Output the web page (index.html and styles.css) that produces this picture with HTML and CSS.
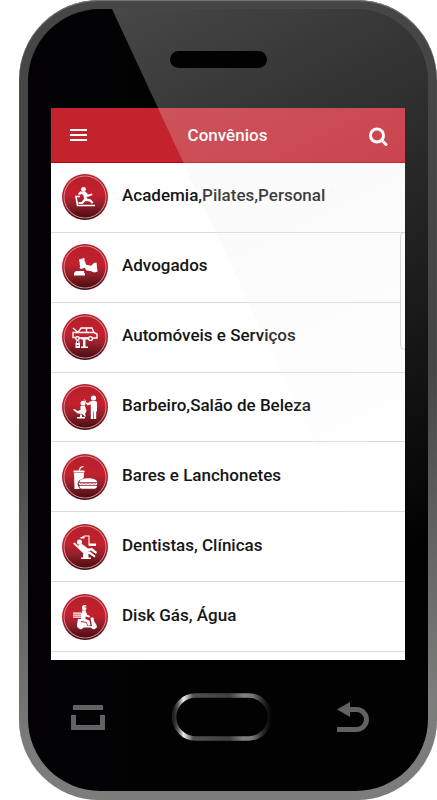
FILE: index.html
```
<!DOCTYPE html>
<html lang="pt-BR">
<head>
    <meta charset="UTF-8">
    <meta name="viewport" content="width=device-width, initial-scale=1.0">
    <title>Convênios</title>
    <link rel="stylesheet" href="styles.css">
</head>
<body>
    <div class="phone">
        <div class="face">
            <div class="top"><div class="speaker"></div></div>

            <div class="screen">
                <header class="bar">
                    <button class="bar-button" aria-label="Menu">
                        <svg width="18" height="14" viewBox="0 0 18 14"><path d="M1 2h17M1 7h17M1 12h17" stroke="#fff" stroke-width="2"/></svg>
                    </button>
                    <h1>Convênios</h1>
                    <button class="bar-button search" aria-label="Buscar">
                        <svg width="20" height="20" viewBox="0 0 20 20" fill="none" stroke="#fff" stroke-width="3"><circle cx="9" cy="8.500" r="6.500"/><path d="M13.500 13l4.500 4.500" stroke-linecap="round"/></svg>
                    </button>
                </header>

                <ul class="list">
                    <li><a class="row" href="#">
                        <svg class="icon" viewBox="0 0 46 46">
                            <circle cx="21.500" cy="15.300" r="2.400"/>
                            <path d="M18 17.500h5.500l2.500 3 4-1 .500 1.500-5 2-1-.500.500 2 4 1 2.500 3-1.500 1.300-2.500-2.300-4-.500-3 3h-4v-2h3l2.500-3-.500-3.500-1.500-1.500-3 1-1-1.300z"/>
                            <path class="line" d="M18 22.500h-4l1.500 9H33" stroke-width="1.600"/>
                        </svg>
                        <span>Academia,Pilates,Personal</span>
                    </a></li>
                    <li><a class="row" href="#">
                        <svg class="icon" viewBox="0 0 46 46">
                            <path d="M17 15.500l5-1.500.800 1-.500 1 2 5 1.200 1-.500 1-6 2-1.500-1 .500-1-.500-5.500-.500-.500z"/>
                            <path d="M23 20.500l6 1.300 3-2.800 2.500-.500 1 9-3 1-4-1.500-4-.500-2-3z"/>
                            <path d="M14 27h8v2h1v2.500H12V29z"/>
                        </svg>
                        <span>Advogados</span>
                    </a></li>
                    <li><a class="row" href="#">
                        <svg class="icon" viewBox="0 0 46 46">
                            <path class="line" d="M11 14l5 4.500M16 18.500h-5v5h3M17 24h9M31 24h4v-4l-3-1.500H16l3-4.500h11l2 4.500M24.500 14v4" stroke-width="1.400"/>
                            <circle class="line" cx="15.500" cy="24.500" r="1.700" stroke-width="1.400"/>
                            <circle class="line" cx="28.500" cy="24.500" r="1.900" stroke-width="1.400"/>
                            <path d="M19 23.500h7v2h-2.500v7H26V34h-7v-1.500h2v-7h-2z"/>
                            <path d="M13.500 29h4.500v5h-4.500z"/>
                            <path class="line" d="M14.500 29v-1.500l1.300-1 1.300 1V29" stroke-width="1"/>
                            <path d="M14.500 31h2.500v.800h-2.500z" fill="#94202a"/>
                        </svg>
                        <span>Automóveis e Serviços</span>
                    </a></li>
                    <li><a class="row" href="#">
                        <svg class="icon" viewBox="0 0 46 46">
                            <circle cx="31.500" cy="14" r="2.600"/>
                            <path d="M29 17h5l1 1.500V27l-.800.500V35h-2.400v-7.500h-.600V35h-2.400V20.500l-3.300.800-1.500-1.500.500-1.300 1.500.500z"/>
                            <circle cx="21" cy="19.300" r="2.500"/>
                            <path d="M18.500 22h4.500l1.500 5-1.500 3 1 2.500h-1.500l-2-2.500-5-.500-4.500-4 1.500-.500 3 2 3-1z"/>
                            <path d="M18 30.500h2V33h3v1.500h-8V33h3z"/>
                            <path class="line" d="M22.500 15.500l2 4" stroke-width=".8"/>
                        </svg>
                        <span>Barbeiro,Salão de Beleza</span>
                    </a></li>
                    <li><a class="row" href="#">
                        <svg class="icon" viewBox="0 0 46 46">
                            <path class="line" d="M17 17l1.500-3.500 3-1" stroke-width="1.200"/>
                            <path d="M11.500 16.500h11v2h-11zM12 19h10l-.300 5-4.700 2.500-1.500 2.500.500 3 1.500 2v1h-5z"/>
                            <path d="M17.500 28c0-5 17.500-5 17.500 0zM16.500 28.700h19l-1 2.300h-17zM17.500 31.700h17.500c0 2-1 3-3 3H20c-2 0-2.500-1-2.500-3z"/>
                            <path d="M18 29.200l2 1 2-1 2 1 2-1 2 1 2-1 2 1 2-1" fill="none" stroke="#94202a" stroke-width=".6"/>
                        </svg>
                        <span>Bares e Lanchonetes</span>
                    </a></li>
                    <li><a class="row" href="#">
                        <svg class="icon" viewBox="0 0 46 46">
                            <circle cx="17.500" cy="18" r="2.600"/>
                            <path class="line" d="M20 13.500l2.500-1.500H27v9h7" stroke-width="1.100"/>
                            <path d="M27 19.500h7V22h-7zM18.500 13h4v1.500h-4z"/>
                            <path d="M17 20.500l3-.500 6 4.500 4-.500 5 4-1 2-5-3.500-4 1.500-3-.500-6-5z"/>
                            <path d="M11 19.500l1.500-1 9.500 8.500 6 .500 5.500 4.500-1 1.500-5-3.500h-5.500z"/>
                            <path d="M21 30h5.500v3.500H29V35H19v-1.500h2z"/>
                        </svg>
                        <span>Dentistas, Clínicas</span>
                    </a></li>
                    <li><a class="row" href="#">
                        <svg class="icon" viewBox="0 0 46 46">
                            <path d="M20 13.500c0-3 4.500-3 4.500-1h-2v1h2l-.500 3h-3.500z"/>
                            <path d="M20.500 16.500h3l1.500 4 3 1.500-.500 1.500-4-1v2.500l4 1.500 1 5h-2.500l-1.500-3.500-5.500-1v-7z"/>
                            <path d="M11 18.500h8v1.300h-8zM11 20.500h8v1.300h-8zM11 22.500h8v1.300h-8z"/>
                            <path d="M16 25h3v3l5 .700 1.500 3.300h4.500l-1-5-.500-3.500h3l.500 3.500 2.500 4 .500 2.500H15.500l-.500-2 .500-4z"/>
                            <path d="M16 32.500h5.500c0 3.500-5.500 3.500-5.500 0zM29 32.500h5.500c0 3.500-5.500 3.500-5.500 0z"/>
                        </svg>
                        <span>Disk Gás, Água</span>
                    </a></li>
                </ul>
                <div class="edge-tab"></div>
            </div>

            <nav class="keys">
                <button class="key" aria-label="Recentes">
                    <svg width="34" height="25" viewBox="0 0 34 25" fill="#626262"><path d="M2 0h30v5H2zM0 10h5v10h24V10h5v15H0z"/></svg>
                </button>
                <button class="key" aria-label="Início">
                    <svg width="100" height="48" viewBox="0 0 100 48">
                        <defs>
                            <linearGradient id="ring">
                                <stop offset="0" stop-color="#222"/>
                                <stop offset=".04" stop-color="#555"/>
                                <stop offset=".1" stop-color="#eee"/>
                                <stop offset=".2" stop-color="#505050"/>
                                <stop offset=".58" stop-color="#404040"/>
                                <stop offset=".72" stop-color="#808280"/>
                                <stop offset=".82" stop-color="#777"/>
                                <stop offset=".92" stop-color="#2b2b2b"/>
                                <stop offset="1" stop-color="#080808"/>
                            </linearGradient>
                        </defs>
                        <rect x="3" y="2.500" width="96" height="43" rx="21.500" fill="none" stroke="url(#ring)" stroke-width="4.500"/>
                    </svg>
                </button>
                <button class="key" aria-label="Voltar">
                    <svg width="32" height="30" viewBox="0 0 32 30"><path d="M0 7.500L13 0v15z" fill="#626262"/><path d="M11 7.500h8.500a10 10 0 0 1 0 20H0" fill="none" stroke="#626262" stroke-width="5"/></svg>
                </button>
            </nav>

            <!-- diagonal reflection on the glass -->
            <svg class="glare" viewBox="0 0 400 782" preserveAspectRatio="none">
                <defs>
                    <linearGradient id="shine" gradientUnits="userSpaceOnUse" x1="84" y1="0" x2="359" y2="550">
                        <stop offset="0" stop-color="#e8e8e8" stop-opacity=".3"/>
                        <stop offset="1" stop-color="#e8e8e8" stop-opacity="0"/>
                    </linearGradient>
                </defs>
                <path d="M84 0H400V680Z" fill="url(#shine)"/>
            </svg>
        </div>
    </div>
</body>
</html>
```
FILE: styles.css
```
* {
    box-sizing: border-box;
}
body {
    margin: 0;
    background-color: #ffffff;
    font-family: Roboto, "Liberation Sans", sans-serif;
}
svg {
    display: block;
}
button {
    padding: 0;
    border: none;
    background: none;
    cursor: pointer;
}
.phone {
    display: flex;
    min-height: 100vh;
    margin-left: 19px;
    padding: 9px;
    border-radius: 80px;
    background: linear-gradient(172deg, #464646 50%, #7b7d7b 88%);
    box-shadow: inset 0 1px 1px #777777;
}
.face {
    position: relative;
    display: flex;
    flex: 1;
    flex-direction: column;
    overflow: hidden;
    border-radius: 72px;
    background: linear-gradient(90deg, #040206, #020202 40%);
}
.top {
    display: flex;
    justify-content: center;
    height: 99px;
    padding: 42px 19px 0 0;
}
.speaker {
    position: relative;
    z-index: 2;
    width: 97px;
    height: 17px;
    border-radius: 9px;
    background-color: #020202;
}
.screen {
    position: relative;
    display: flex;
    flex: 1;
    flex-direction: column;
    margin: 0 23px;
    background-color: #ffffff;
}
.bar {
    display: flex;
    justify-content: space-between;
    align-items: center;
    height: 55px;
    padding: 0 17px 0 18px;
    border-bottom: 1px solid #b80012;
    background-color: #c4232e;
}
.bar h1 {
    margin: 0;
    color: #ffffff;
    font-size: 17px;
    font-weight: 500;
    line-height: 20px;
}
.search {
    padding-top: 4px;
}
.list {
    display: flex;
    flex: 1;
    flex-direction: column;
    margin: 0;
    padding: 0 0 8px;
    list-style: none;
}
.list li {
    display: flex;
    flex: 1;
    border-bottom: 1px solid #dcdcdc;
}
.row {
    display: flex;
    flex: 1;
    align-items: center;
    gap: 14px;
    padding: 0 11px;
    color: #161616;
    font-size: 17px;
    font-weight: 500;
    line-height: 20px;
    text-decoration: none;
}
.row span {
    padding-bottom: 4px;
}
.icon {
    flex: none;
    width: 46px;
    height: 46px;
    border-radius: 50%;
    background: radial-gradient(circle closest-side, transparent 87%, #d98a90 91%, transparent 95%), linear-gradient(#b5202b, #c4202e 45%, #95202a 65%, #3a0a0e);
    fill: #ffffff;
}
.icon .line {
    fill: none;
    stroke: #ffffff;
}
.edge-tab {
    position: absolute;
    top: 124px;
    right: 0;
    width: 5px;
    height: 118px;
    border: 1px solid #d4d4d4;
    border-right: none;
    border-radius: 5px 0 0 5px;
    background-color: #ffffff;
}
.keys {
    display: flex;
    justify-content: space-between;
    align-items: center;
    padding: 33px 59px 50px 43px;
}
.glare {
    position: absolute;
    top: 0;
    left: 0;
    width: 100%;
    height: 100%;
    pointer-events: none;
}
```
